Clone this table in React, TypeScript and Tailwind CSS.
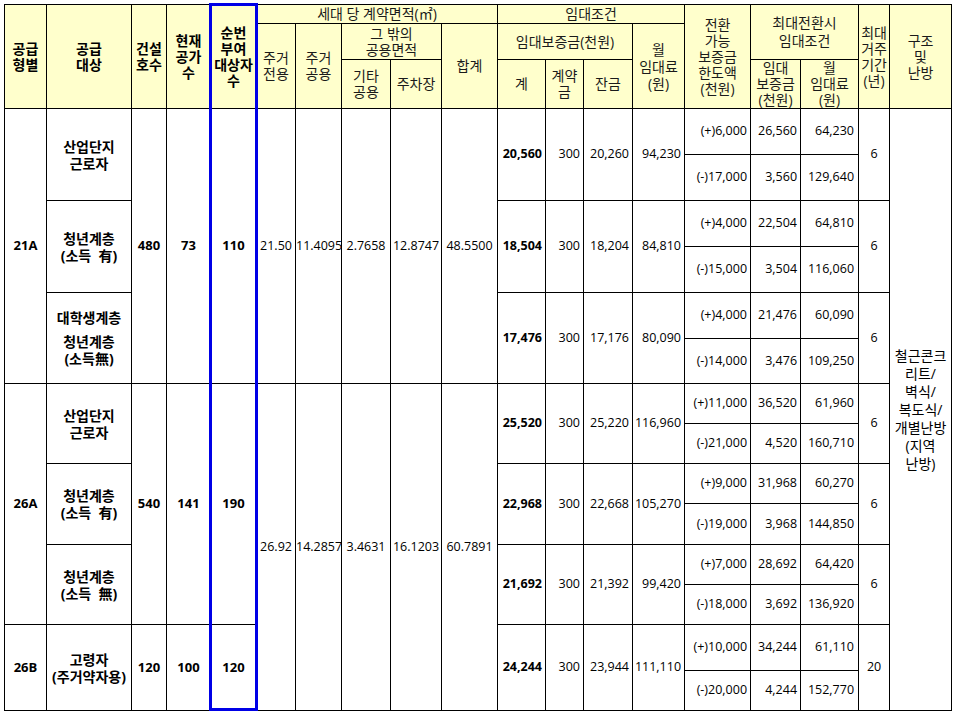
import React from "react";

type Sub = [string, string, string];
type Group = {
  label: string[];
  gap?: boolean;
  total: string;
  down: string;
  rest: string;
  monthly: string;
  subs: Sub[];
  period: string;
  heights: [number, number];
};

const groups: Group[] = [
  { label: ["산업단지", "근로자"], total: "20,560", down: "300", rest: "20,260", monthly: "94,230", subs: [["(+)6,000", "26,560", "64,230"], ["(-)17,000", "3,560", "129,640"]], period: "6", heights: [46, 46] },
  { label: ["청년계층", "(소득\u00a0\u00a0有)"], total: "18,504", down: "300", rest: "18,204", monthly: "84,810", subs: [["(+)4,000", "22,504", "64,810"], ["(-)15,000", "3,504", "116,060"]], period: "6", heights: [46, 46] },
  { label: ["대학생계층", "청년계층", "(소득無)"], gap: true, total: "17,476", down: "300", rest: "17,176", monthly: "80,090", subs: [["(+)4,000", "21,476", "60,090"], ["(-)14,000", "3,476", "109,250"]], period: "6", heights: [46, 45] },
  { label: ["산업단지", "근로자"], total: "25,520", down: "300", rest: "25,220", monthly: "116,960", subs: [["(+)11,000", "36,520", "61,960"], ["(-)21,000", "4,520", "160,710"]], period: "6", heights: [40, 40] },
  { label: ["청년계층", "(소득\u00a0\u00a0有)"], total: "22,968", down: "300", rest: "22,668", monthly: "105,270", subs: [["(+)9,000", "31,968", "60,270"], ["(-)19,000", "3,968", "144,850"]], period: "6", heights: [40, 41] },
  { label: ["청년계층", "(소득\u00a0\u00a0無)"], total: "21,692", down: "300", rest: "21,392", monthly: "99,420", subs: [["(+)7,000", "28,692", "64,420"], ["(-)18,000", "3,692", "136,920"]], period: "6", heights: [40, 40] },
  { label: ["고령자", "(주거약자용)"], total: "24,244", down: "300", rest: "23,944", monthly: "111,110", subs: [["(+)10,000", "34,244", "61,110"], ["(-)20,000", "4,244", "152,770"]], period: "20", heights: [46, 40] },
];

const colWidths = [42, 85, 35, 44, 46, 39, 46, 49, 51, 56, 48, 38, 49, 52, 66, 50, 58, 31, 62];

const H = "border border-black bg-[#ffffcc] text-center align-middle p-0";
const HB = `${H} font-bold text-[14px] leading-[16px] text-black`;
const HR = `${H} font-normal text-[14px] leading-[16px] text-[#1a1a1a]`;
const C = "border border-black text-center align-middle p-0";
const NUM = "border border-black text-right align-middle p-0 pr-[3px] text-[12.5px] whitespace-nowrap";

function Lines({ lines, leading = "" }: { lines: string[]; leading?: string }) {
  return (
    <div className={leading}>
      {lines.map((l, i) => (
        <div key={i}>{l}</div>
      ))}
    </div>
  );
}

function Label({ g }: { g: Group }) {
  return (
    <td rowSpan={2} className={`${C} font-bold text-[14px] leading-[17px]`}>
      {g.gap ? (
        <div>
          <div className="mb-[7px]">{g.label[0]}</div>
          <div>{g.label[1]}</div>
          <div>{g.label[2]}</div>
        </div>
      ) : (
        <Lines lines={g.label} />
      )}
    </td>
  );
}

export default function App() {
  const rows: React.ReactNode[] = [];
  groups.forEach((g, gi) => {
    g.subs.forEach((s, si) => {
      const cells: React.ReactNode[] = [];
      if (si === 0) {
        if (gi === 0 || gi === 3 || gi === 6) {
          const span = gi === 6 ? 2 : 6;
          const type = gi === 0 ? "21A" : gi === 3 ? "26A" : "26B";
          const vals = gi === 0 ? ["480", "73", "110"] : gi === 3 ? ["540", "141", "190"] : ["120", "100", "120"];
          cells.push(
            <td key="c1" rowSpan={span} className={`${C} font-bold text-[13px]`}>{type}</td>
          );
          cells.push(<Label key="c2" g={g} />);
          vals.forEach((v, i) =>
            cells.push(
              <td key={`v${i}`} rowSpan={span} className={`${C} font-bold text-[13px]`}>{v}</td>
            )
          );
          if (gi === 0 || gi === 3) {
            const area = gi === 0 ? ["21.50", "11.4095", "2.7658", "12.8747", "48.5500"] : ["26.92", "14.2857", "3.4631", "16.1203", "60.7891"];
            area.forEach((a, i) =>
              cells.push(
                <td key={`a${i}`} rowSpan={gi === 0 ? 6 : 8} className={`${C} text-[12.5px] whitespace-nowrap`}>{a}</td>
              )
            );
          }
        } else {
          cells.push(<Label key="c2" g={g} />);
        }
        cells.push(<td key="t" rowSpan={2} className={`${NUM} font-bold`}>{g.total}</td>);
        cells.push(<td key="d" rowSpan={2} className={NUM}>{g.down}</td>);
        cells.push(<td key="r" rowSpan={2} className={NUM}>{g.rest}</td>);
        cells.push(<td key="m" rowSpan={2} className={NUM}>{g.monthly}</td>);
      }
      cells.push(<td key="s0" className={NUM}>{s[0]}</td>);
      cells.push(<td key="s1" className={NUM}>{s[1]}</td>);
      cells.push(<td key="s2" className={`${NUM} pr-[4px]`}>{s[2]}</td>);
      if (si === 0) {
        cells.push(<td key="p" rowSpan={2} className={`${C} text-[12.5px]`}>{g.period}</td>);
      }
      if (gi === 0 && si === 0) {
        cells.push(
          <td key="st" rowSpan={14} className={`${C} text-[14px] leading-[18px]`}>
            <Lines lines={["철근콘크", "리트/", "벽식/", "복도식/", "개별난방", "(지역", "난방)"]} />
          </td>
        );
      }
      rows.push(
        <tr key={`${gi}-${si}`} style={{ height: g.heights[si] }}>
          {cells}
        </tr>
      );
    });
  });

  return (
    <div className="relative w-[954px] h-[712px] bg-white pt-[4px] pl-[4px] font-['Open_Sans','Noto_Sans_CJK_KR',sans-serif] text-black">
      <table className="table-fixed border-collapse w-[948px]">
        <colgroup>
          {colWidths.map((w, i) => (
            <col key={i} style={{ width: w }} />
          ))}
        </colgroup>
        <thead>
          <tr className="h-[19px]">
            <th rowSpan={3} className={HB}><Lines lines={["공급", "형별"]} /></th>
            <th rowSpan={3} className={HB}><Lines lines={["공급", "대상"]} /></th>
            <th rowSpan={3} className={HB}><Lines lines={["건설", "호수"]} /></th>
            <th rowSpan={3} className={HB}><Lines lines={["현재", "공가", "수"]} /></th>
            <th rowSpan={3} className={HB}><Lines lines={["순번", "부여", "대상자", "수"]} /></th>
            <th colSpan={5} className={`${HR} whitespace-pre`}>세대 당 계약면적(㎡)</th>
            <th colSpan={4} className={HR}>임대조건</th>
            <th rowSpan={3} className={HR}><Lines lines={["전환", "가능", "보증금", "한도액", "(천원)"]} /></th>
            <th rowSpan={2} colSpan={2} className={`${HR} leading-[18px]`}><Lines lines={["최대전환시", "임대조건"]} /></th>
            <th rowSpan={3} className={HR}><Lines lines={["최대", "거주", "기간", "(년)"]} /></th>
            <th rowSpan={3} className={HR}><Lines lines={["구조", "및", "난방"]} /></th>
          </tr>
          <tr className="h-[36px]">
            <th rowSpan={2} className={HR}><Lines lines={["주거", "전용"]} /></th>
            <th rowSpan={2} className={HR}><Lines lines={["주거", "공용"]} /></th>
            <th colSpan={2} className={`${HR} leading-[15px]`}><Lines lines={["그 밖의", "공용면적"]} /></th>
            <th rowSpan={2} className={HR}>합계</th>
            <th colSpan={3} className={HR}>임대보증금(천원)</th>
            <th rowSpan={2} className={`${HR} leading-[17px]`}><Lines lines={["월", "임대료", "(원)"]} /></th>
          </tr>
          <tr className="h-[48px]">
            <th className={HR}><Lines lines={["기타", "공용"]} /></th>
            <th className={HR}>주차장</th>
            <th className={HR}>계</th>
            <th className={HR}><Lines lines={["계약", "금"]} /></th>
            <th className={HR}>잔금</th>
            <th className={`${HR} leading-[13px]`}><Lines lines={["임대", "보증금", "(천원)"]} /></th>
            <th className={`${HR} leading-[14px]`}><Lines lines={["월", "임대료", "(원)"]} /></th>
          </tr>
        </thead>
        <tbody>{rows}</tbody>
      </table>
      <div className="absolute left-[209px] top-[3px] w-[49px] h-[708px] border-[3px] border-[#0000e6] pointer-events-none" />
    </div>
  );
}
